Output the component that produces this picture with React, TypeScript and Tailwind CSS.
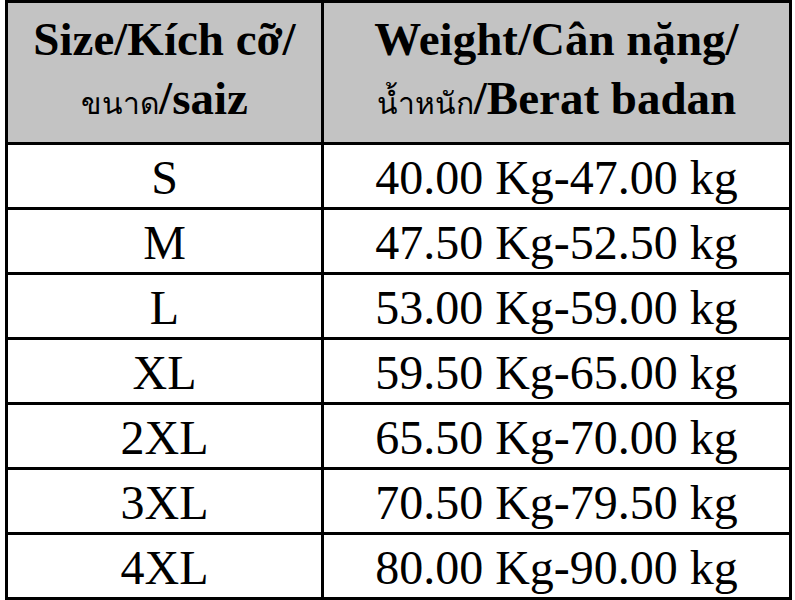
import React from 'react';

const rows: [string, string][] = [
    ['S', '40.00 Kg-47.00 kg'],
    ['M', '47.50 Kg-52.50 kg'],
    ['L', '53.00 Kg-59.00 kg'],
    ['XL', '59.50 Kg-65.00 kg'],
    ['2XL', '65.50 Kg-70.00 kg'],
    ['3XL', '70.50 Kg-79.50 kg'],
    ['4XL', '80.00 Kg-90.00 kg'],
];

const App: React.FC = () => {
    return (
        <div className="w-[795px] h-[600px] bg-white overflow-hidden font-['Liberation_Serif','Times_New_Roman',serif] text-black">
            <div className="ml-[5px] w-[787px] h-[600px] border-[3px] border-black flex flex-col">
                <div className="grid grid-cols-[316px_1fr] h-[142px] shrink-0 bg-[#c3c3c3] border-b-[3px] border-black font-bold text-[47px] leading-[59px]">
                    <div className="border-r-[3px] border-black flex flex-col items-center justify-center pb-[2px]">
                        <span>Size/Kích cỡ/</span>
                        <span><span className="text-[30px] font-normal">ขนาด</span>/saiz</span>
                    </div>
                    <div className="flex flex-col items-center justify-center pb-[2px]">
                        <span>Weight/Cân nặng/</span>
                        <span><span className="text-[30px] font-normal">น้ำหนัก</span>/Berat badan</span>
                    </div>
                </div>
                {rows.map(([size, weight], i) => (
                    <div key={size} className={`grid grid-cols-[316px_1fr] text-[48px] leading-none ${i < rows.length - 1 ? 'h-[65px] shrink-0 border-b-[3px] border-black' : 'flex-1'}`}>
                        <div className="border-r-[3px] border-black flex items-center justify-center pt-[4px]">{size}</div>
                        <div className="flex items-center justify-center pt-[4px]">{weight}</div>
                    </div>
                ))}
            </div>
        </div>
    );
};

export default App;
